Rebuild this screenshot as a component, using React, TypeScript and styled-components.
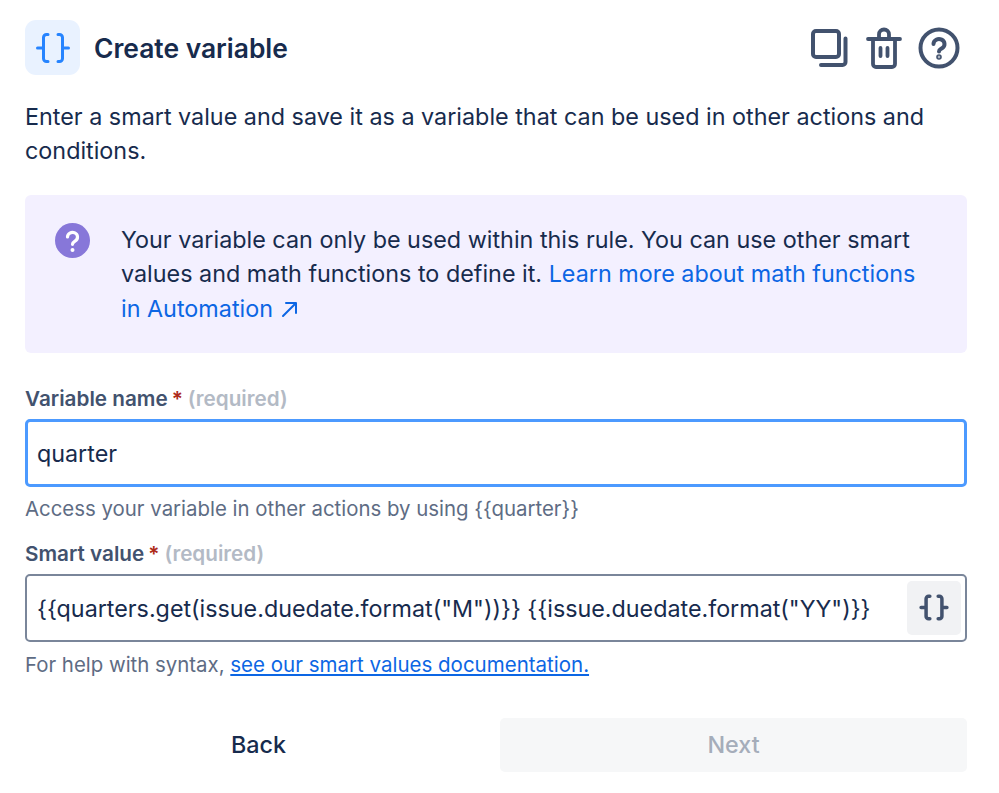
import React from "react";
import styled, { createGlobalStyle } from "styled-components";

const GlobalStyle = createGlobalStyle`
  html, body {
    margin: 0;
    padding: 0;
    background: #fff;
    font-family: Inter, "Noto Sans", sans-serif;
    color: #172b4d;
  }
`;

const Page = styled.div`
  width: 942px;
  padding: 20px 32px 0 25px;
`;

const Header = styled.div`
  display: flex;
  align-items: center;
  height: 55px;
`;

const IconTile = styled.div`
  width: 55px;
  height: 55px;
  border-radius: 11px;
  background: #e9f2ff;
  display: flex;
  align-items: center;
  justify-content: center;
  color: #2684ff;
`;

const Title = styled.h1`
  margin: 0 0 0 14px;
  flex: 1;
  font-size: 26.4px;
  font-weight: 600;
  color: #172b4d;
`;

const Actions = styled.div`
  display: flex;
  align-items: center;
  gap: 16px;
  margin-right: 7px;
  color: #42526e;
`;

const Intro = styled.p`
  margin: 25px 0 0;
  font-size: 23.35px;
  line-height: 34.4px;
`;

const Notice = styled.div`
  margin-top: 26px;
  height: 158px;
  box-sizing: border-box;
  padding: 28px 30px 0;
  display: flex;
  gap: 31px;
  border-radius: 6px;
  background: #f3f0ff;
`;

const NoticeText = styled.div`
  flex: 1;
  font-size: 23.35px;
  line-height: 34.4px;
`;

const Link = styled.a`
  color: #0c66e4;
  text-decoration: none;
`;

const Label = styled.label<{ $first?: boolean }>`
  display: block;
  margin-top: ${(p) => (p.$first ? "34px" : "21px")};
  height: 24px;
  line-height: 24px;
  font-size: 20.7px;
  font-weight: 600;
  color: #42526e;
`;

const Star = styled.span`
  color: #ae2a19;
  margin-left: 4px;
`;

const Required = styled.span`
  color: #b3bac5;
  margin-left: 5px;
`;

const Field = styled.div<{ $focused?: boolean }>`
  margin-top: 8px;
  height: 68px;
  box-sizing: border-box;
  display: flex;
  align-items: center;
  padding-left: ${(p) => (p.$focused ? "9px" : "10px")};
  padding-right: 4px;
  border-radius: 5px;
  background: #fff;
  border: ${(p) => (p.$focused ? "3px solid #4c9aff" : "2px solid #7a869a")};
  font-size: 23.3px;
  color: #172b4d;
`;

const FieldValue = styled.span`
  flex: 1;
  white-space: nowrap;
  padding-top: 1px;
`;

const InsertButton = styled.div`
  width: 54px;
  height: 54px;
  border-radius: 5px;
  background: #f1f2f4;
  display: flex;
  align-items: center;
  justify-content: center;
  color: #42526e;
`;

const Help = styled.div<{ $last?: boolean }>`
  margin-top: ${(p) => (p.$last ? "11px" : "10px")};
  height: 24px;
  line-height: 24px;
  font-size: 20.4px;
  color: #5e6c84;
`;

const HelpLink = styled(Link)`
  text-decoration: underline;
  font-size: 20.5px;
`;

const Footer = styled.div`
  margin-top: 41px;
  display: grid;
  grid-template-columns: 1fr 1fr;
  gap: 8px;
`;

const Button = styled.div<{ $disabled?: boolean }>`
  height: 54px;
  border-radius: 5px;
  display: flex;
  align-items: center;
  justify-content: center;
  font-size: 23.3px;
  font-weight: 500;
  background: ${(p) => (p.$disabled ? "#f6f7f8" : "transparent")};
  color: ${(p) => (p.$disabled ? "#a5adba" : "#172b4d")};
`;

const Braces = ({ w, h, stroke }: { w: number; h: number; stroke: number }) => (
  <svg width={w} height={h} viewBox="0 0 36 32" fill="none" stroke="currentColor" strokeWidth={stroke} strokeLinecap="round" strokeLinejoin="round">
    <path d="M13 2.500h-1.500a3 3 0 0 0-3 3v21a3 3 0 0 0 3 3H13M2.500 16h6" />
    <path d="M23 2.500h1.500a3 3 0 0 1 3 3v21a3 3 0 0 1-3 3H23M33.500 16h-6" />
  </svg>
);

const CopyIcon = () => (
  <svg width="39" height="38" viewBox="0 0 39 38" fill="none" stroke="currentColor" strokeWidth="4" strokeLinecap="round" strokeLinejoin="round">
    <rect x="2" y="2" width="26" height="26" rx="3" />
    <path d="M34.500 9.500V33a3 3 0 0 1-3 3H10" />
  </svg>
);

const TrashIcon = () => (
  <svg width="36" height="42" viewBox="0 0 36 42" fill="none" stroke="currentColor" strokeWidth="3.800" strokeLinecap="round" strokeLinejoin="round">
    <path d="M2 12h32" />
    <path d="M13 12V7.500a5 5 0 0 1 10 0V12" />
    <path d="M7 12v25a3 3 0 0 0 3 3h16a3 3 0 0 0 3-3V12" />
    <path d="M14.500 21v8M21.500 21v8" />
  </svg>
);

const HelpIcon = () => (
  <svg width="42" height="42" viewBox="0 0 42 42" fill="none" stroke="currentColor" strokeWidth="4" strokeLinecap="round" strokeLinejoin="round">
    <circle cx="21" cy="21" r="18.500" />
    <path d="M15.500 17a5.500 5 0 1 1 8.500 4.200c-1.800 1.100-3 1.600-3 3.300" />
    <circle cx="21" cy="30" r="0.800" fill="currentColor" />
  </svg>
);

const NoticeIcon = () => (
  <svg width="35" height="35" viewBox="0 0 35 35">
    <circle cx="17.500" cy="17.500" r="17.500" fill="#8777d9" />
    <path d="M12.500 14a5 4.600 0 1 1 7.800 3.800c-1.700 1.100-2.800 1.800-2.800 3.500" fill="none" stroke="#fff" strokeWidth="3.200" strokeLinecap="round" />
    <circle cx="17.500" cy="27" r="2" fill="#fff" />
  </svg>
);

const ArrowIcon = () => (
  <svg width="18" height="18" viewBox="0 0 18 18" fill="none" stroke="currentColor" strokeWidth="2" strokeLinecap="round" strokeLinejoin="round" style={{ verticalAlign: "-1px" }}>
    <path d="M3 16 15.500 3.500M6 3h10v10" />
  </svg>
);

export default function App() {
  return (
    <Page>
      <GlobalStyle />
      <Header>
        <IconTile>
          <Braces w={36} h={32} stroke={3} />
        </IconTile>
        <Title>Create variable</Title>
        <Actions>
          <CopyIcon />
          <TrashIcon />
          <HelpIcon />
        </Actions>
      </Header>
      <Intro>
        Enter a smart value and save it as a variable that can be used in other actions and conditions.
      </Intro>
      <Notice>
        <NoticeIcon />
        <NoticeText>
          Your variable can only be used within this rule. You can use other smart values and math functions to define it.{" "}
          <Link href="#">
            Learn more about math functions in Automation <ArrowIcon />
          </Link>
        </NoticeText>
      </Notice>
      <Label $first>
        Variable name<Star>*</Star>
        <Required>(required)</Required>
      </Label>
      <Field $focused>
        <FieldValue>quarter</FieldValue>
      </Field>
      <Help>Access your variable in other actions by using {"{{quarter}}"}</Help>
      <Label>
        Smart value<Star>*</Star>
        <Required>(required)</Required>
      </Label>
      <Field>
        <FieldValue>{'{{quarters.get(issue.duedate.format("M"))}} {{issue.duedate.format("YY")}}'}</FieldValue>
        <InsertButton>
          <Braces w={30} h={27} stroke={4.200} />
        </InsertButton>
      </Field>
      <Help $last>
        For help with syntax, <HelpLink href="#">see our smart values documentation.</HelpLink>
      </Help>
      <Footer>
        <Button>Back</Button>
        <Button $disabled>Next</Button>
      </Footer>
    </Page>
  );
}
